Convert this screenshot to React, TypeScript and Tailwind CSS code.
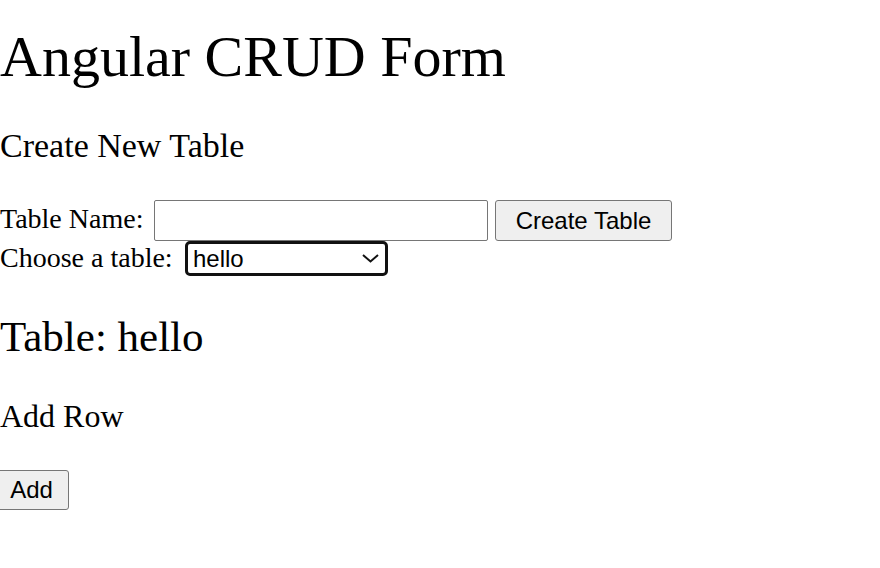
import type { ReactNode } from "react";

const serif = "font-['Liberation_Serif',serif] text-black";
const sans = "font-['Liberation_Sans',Arial,sans-serif] text-black";

function Chevron(): ReactNode {
	return (
		<svg
			width="17"
			height="9"
			viewBox="0 0 17 9"
			className="pointer-events-none absolute right-[9px] top-[13px]"
		>
			<path d="M1 1 L8.5 7.5 L16 1" fill="none" stroke="#111" strokeWidth="2" />
		</svg>
	);
}

export default function App(): ReactNode {
	return (
		<div className="flex min-h-[568px] w-[880px] flex-col bg-white">
			<h1 className={`${serif} mt-[28px] text-[58px] leading-[58px] font-normal`}>
				Angular CRUD Form
			</h1>
			<h3 className={`${serif} mt-[43px] text-[34px] leading-[34px] font-normal`}>
				Create New Table
			</h3>

			<div className="mt-[37px] flex items-start">
				<label className={`${serif} w-[154px] text-[28px] leading-[37px]`}>Table Name:</label>
				<input
					type="text"
					className="h-[41px] w-[334px] rounded-[2px] border border-[#767676] bg-white"
				/>
				<button
					className={`${sans} ml-[7px] h-[41px] w-[177px] rounded-[3px] border border-[#767676] bg-[#efefef] text-[24px] leading-none`}
				>
					Create Table
				</button>
			</div>

			<div className="flex items-start">
				<label className={`${serif} w-[185px] text-[28px] leading-[33px]`}>Choose a table:</label>
				<div className="relative h-[35px] w-[203px]">
					<select
						defaultValue="hello"
						className={`${sans} h-full w-full appearance-none rounded-[5px] border-[3px] border-[#111] bg-white pl-[5px] text-[24px] leading-none outline-none`}
					>
						<option value="hello">hello</option>
					</select>
					<Chevron />
				</div>
			</div>

			<h2 className={`${serif} mt-[39px] text-[43px] leading-[43px] font-normal`}>
				Table: hello
			</h2>
			<h3 className={`${serif} mt-[42px] text-[32px] leading-[32px] font-normal`}>Add Row</h3>

			<div className="mt-[38px] flex">
				<button
					className={`${sans} ml-[-6px] h-[40px] w-[75px] rounded-[3px] border border-[#767676] bg-[#efefef] text-[24px] leading-none`}
				>
					Add
				</button>
			</div>
		</div>
	);
}
